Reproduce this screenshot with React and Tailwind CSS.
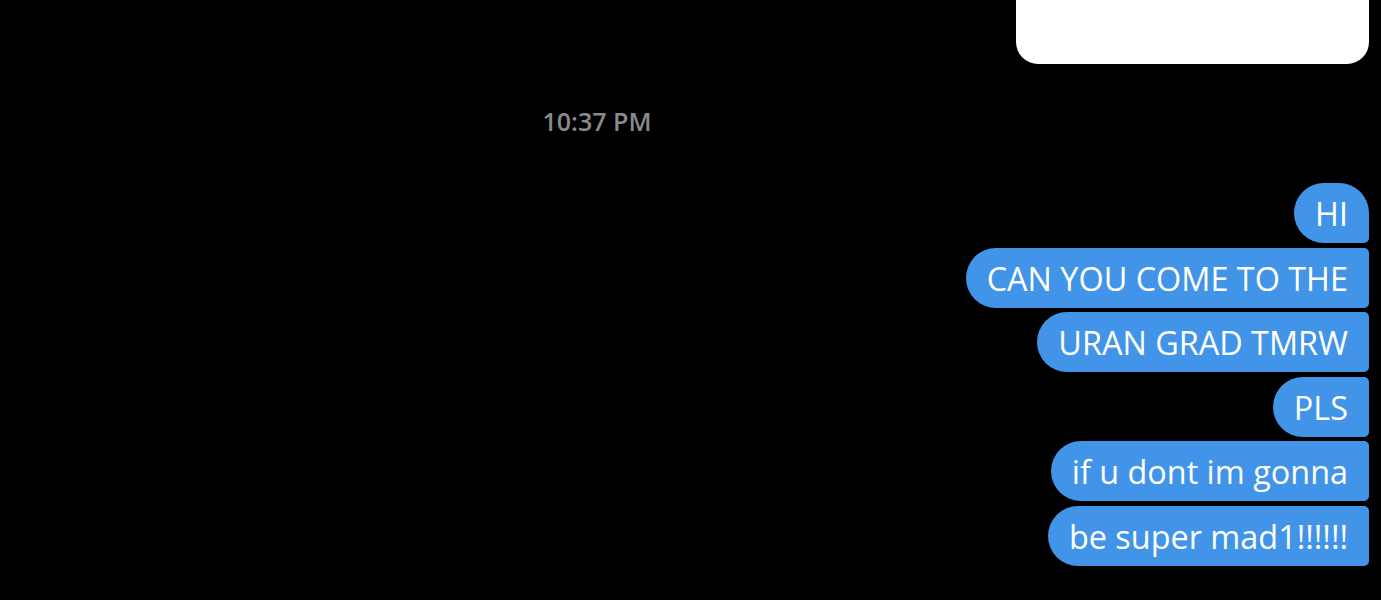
import React from 'react'

const messages = [
    { text: 'HI', first: true },
    { text: 'CAN YOU COME TO THE' },
    { text: 'URAN GRAD TMRW' },
    { text: 'PLS' },
    { text: 'if u dont im gonna' },
    { text: 'be super mad1!!!!!!' },
]

function Bubble({ text, first }) {
    return (
        <div
            className={`h-[60px] flex items-center bg-[#4294e8] text-white text-[32.4px] px-[21px] rounded-l-[30px] ${first ? 'rounded-tr-[30px] rounded-br-[5px]' : 'rounded-r-[5px]'}`}
        >
            <span className="leading-none whitespace-nowrap pt-[1px]">{text}</span>
        </div>
    )
}

export default function App() {
    return (
        <div className="w-[1381px] h-[600px] bg-black overflow-hidden flex flex-col" style={{ fontFamily: '"Open Sans", "Noto Sans", sans-serif' }}>
            {/* attachment card, cut off at the top */}
            <div className="flex justify-end pr-[12px]">
                <div className="w-[353px] h-[64px] bg-white rounded-b-[22px]" />
            </div>

            {/* timestamp */}
            <div className="w-[1194px] text-center mt-[42px] h-[30px] text-[25px] leading-[30px] font-semibold text-[#8a8a8e]">
                10:37 PM
            </div>

            {/* message bubbles */}
            <div className="flex flex-col items-end gap-[4.5px] pr-[12px] mt-[47px]">
                {messages.map((m, i) => (
                    <Bubble key={i} text={m.text} first={m.first} />
                ))}
            </div>
        </div>
    )
}
